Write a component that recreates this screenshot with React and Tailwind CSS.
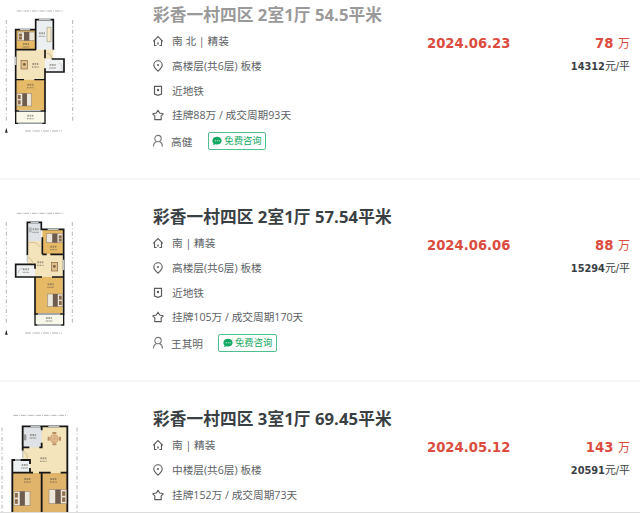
const WOOD = '#e6b966';
const FLOOR = '#f4e4bc';
const TILE = '#dfe3e8';

const listings = [
  {
    title: '彩香一村四区 2室1厅 54.5平米',
    visited: true,
    facing: '南 北 | 精装',
    floor: '高楼层(共6层) 板楼',
    metro: true,
    deal: '挂牌88万 / 成交周期93天',
    agent: '高健',
    date: '2024.06.23',
    price: '78',
    unit: '14312',
    plan: 'first',
  },
  {
    title: '彩香一村四区 2室1厅 57.54平米',
    facing: '南 | 精装',
    floor: '高楼层(共6层) 板楼',
    metro: true,
    deal: '挂牌105万 / 成交周期170天',
    agent: '王其明',
    date: '2024.06.06',
    price: '88',
    unit: '15294',
    plan: 'second',
  },
  {
    title: '彩香一村四区 3室1厅 69.45平米',
    facing: '南 | 精装',
    floor: '中楼层(共6层) 板楼',
    deal: '挂牌152万 / 成交周期73天',
    date: '2024.05.12',
    price: '143',
    unit: '20591',
    plan: 'third',
  },
];

function HomeIcon() {
  return (
    <svg viewBox="0 0 12 12" className="h-3 w-3" fill="none" stroke="currentColor" strokeWidth="1.1">
      <path d="M1.2 6.4 6 1.6l4.8 4.8M2.5 5.2v5.3h2.1M9.5 5.2v5.3H7.4" />
      <path d="M6 7.6v1.9" strokeWidth="1.5" />
    </svg>
  );
}

function PinIcon() {
  return (
    <svg viewBox="0 0 12 12" className="h-3 w-3" fill="none" stroke="currentColor" strokeWidth="1.1">
      <path d="M6 11.2C3.4 8.9 1.8 7.1 1.8 5a4.2 4.2 0 0 1 8.4 0c0 2.1-1.6 3.9-4.2 6.2z" />
      <circle cx="6" cy="5" r="1" fill="currentColor" stroke="none" />
    </svg>
  );
}

function MetroIcon() {
  return (
    <svg viewBox="0 0 12 12" className="h-3 w-3" fill="none" stroke="currentColor" strokeWidth="1.2">
      <path d="M2.5 1.3h7v7.7L6 10.3 2.5 9z" />
      <circle cx="6" cy="5" r="1.2" fill="currentColor" stroke="none" />
    </svg>
  );
}

function StarIcon() {
  return (
    <svg viewBox="0 0 12 12" className="h-3 w-3" fill="none" stroke="currentColor" strokeWidth="1.1" strokeLinejoin="round">
      <path d="M6 1.2 7.7 4l3.5.8-2.1 2.3.2 3.5H2.7l.2-3.5L.8 4.8 4.3 4z" />
    </svg>
  );
}

function UserIcon() {
  return (
    <svg viewBox="0 0 12 14" className="h-3.5 w-3" fill="none" stroke="currentColor" strokeWidth="1.1">
      <circle cx="6" cy="4.6" r="3.2" />
      <path d="M1.5 12.5c0-2.6 1.2-4.2 3-5M10.5 12.5c0-2.6-1.2-4.2-3-5" />
    </svg>
  );
}

function ChatIcon() {
  return (
    <svg viewBox="0 0 10 10" className="h-[10px] w-[10px]">
      <path d="M5 .8c2.6 0 4.6 1.6 4.6 3.9S7.6 8.6 5 8.6c-.6 0-1.2-.1-1.7-.3L1.2 9.2l.3-1.8C.8 6.7.4 5.8.4 4.7.4 2.4 2.4.8 5 .8z" fill="#11a862" />
      <path d="M3.2 4.8h.1M5.2 4.8h.1M7.2 4.8h.1" stroke="#fff" strokeWidth="1" strokeLinecap="round" />
    </svg>
  );
}

function Bed({ x, y, w, h, flip }) {
  return (
    <g>
      <rect x={x} y={y} width={w} height={h} fill="#ece6da" stroke="#a08c70" strokeWidth="2" />
      <rect x={x + w * 0.36} y={y} width={w * 0.32} height={h} fill="#6e5c4e" />
      <rect x={flip ? x + w * 0.76 : x + 3} y={y + 5} width={w * 0.18} height={h * 0.32} fill="#8b6c4c" />
      <rect x={flip ? x + w * 0.76 : x + 3} y={y + h * 0.55} width={w * 0.18} height={h * 0.32} fill="#8b6c4c" />
    </g>
  );
}

function Label({ x, y }) {
  return (
    <g stroke="#564f45" opacity="0.5">
      <path d={`M${x - 9} ${y}h18`} strokeWidth="6" strokeDasharray="5 2" />
      <path d={`M${x - 10} ${y + 9}h20`} strokeWidth="4" strokeDasharray="3 1.5" />
    </g>
  );
}

function Dimensions({ top, left, right, from, to, bottom, start, end }) {
  return (
    <g stroke="#a6a6a6" strokeWidth="2.5" fill="none">
      <path d={`M${from} ${top}H${to}`} strokeDasharray="14 3 3 3" />
      <path d={`M${left} ${start}V${end}M${right} ${start}V${end}`} strokeDasharray="12 7 3 7" />
      {bottom && <path d={`M${from + 25} ${bottom}H${to - 4}`} strokeDasharray="18 3 3 3" />}
      {bottom && <path d={`M${left} ${bottom - 10}l4 15h-8z`} fill="#222" stroke="none" />}
    </g>
  );
}

function PlanFirst() {
  return (
    <>
      <Dimensions top={33} left={19} right={218} from={50} to={190} bottom={393} start={60} end={368} />
      <path d="M107 59h53v90h-53z" fill="#eceff1" />
      <path d="M47 89h61v60H47z" fill={WOOD} />
      <path d="M47 149h88v90H47z" fill={FLOOR} />
      <path d="M135 149h25v28h-25z" fill={FLOOR} />
      <path d="M135 177h57v39h-57z" fill="#eff1f2" />
      <path d="M47 239h88v92H47z" fill={WOOD} />
      <path d="M47 335h88v34H47z" fill="#fbf9e9" />
      <g fill="none" stroke="#161616" strokeWidth="5">
        <path d="M160 149V59h-53v90M107 89H47v60h61M47 149v184h88v-94M135 149v26M135 216h57v-39h-37M135 205v34" />
        <path d="M47 239h25M103 239h32M47 332v38h88v-38" strokeWidth="4" />
        <path d="M117 59h35M60 89h30M47 170v25M57 332h65M54 369h73" stroke="#c3c9cb" strokeWidth="4" />
        <path d="M142 160a15 15 0 0 1 12 16" stroke="#b2a37e" strokeWidth="2" />
      </g>
      <Bed x={54} y={96} w={50} h={26} />
      <Bed x={51} y={280} w={44} h={38} />
      <rect x="63" y="181" width="19" height="26" fill="#dec18a" stroke="#876348" strokeWidth="2" />
      <circle cx="73" cy="193" r="4" fill="#795b43" />
      <path d="M141 82h12v43h-12z" fill="#f7eacb" stroke="#a59f8c" strokeWidth="2" />
      <path d="M178 190q8 1 8 13v10" stroke="#bdbdbd" strokeWidth="2" fill="none" />
      <Label x={126} y={100} />
      <Label x={78} y={132} />
      <Label x={106} y={192} />
      <Label x={158} y={195} />
      <Label x={91} y={254} />
      <Label x={91} y={347} />
    </>
  );
}

function PlanSecond() {
  return (
    <>
      <Dimensions top={34} left={19} right={217} from={50} to={190} bottom={393} start={60} end={368} />
      <path d="M82 61h42v56H82z" fill={TILE} />
      <path d="M127 82h64v75h-64z" fill={WOOD} />
      <path d="M82 117h45v40h64v68H105v-38H82z" fill={FLOOR} />
      <path d="M47 188h58v37H47z" fill="#eff1f2" />
      <path d="M105 225h83v111h-83z" fill={WOOD} />
      <path d="M105 338h86v31h-86z" fill="#f7f8e9" />
      <g fill="none" stroke="#161616" strokeWidth="5">
        <path d="M82 160V61h42v21h67v254h-86V225H47v-38h58v13M127 106v51M127 157h13M151 157h40M105 225h21M156 225h35" />
        <path d="M105 336v33h86v-33" strokeWidth="4" />
        <path d="M92 61h24M143 82h33M191 173v31M82 160v21M114 336h67M112 369h72" stroke="#c3c9cb" strokeWidth="4" />
        <path d="M85 123c14-5 27 0 36 12M83 166q14 4 15 20" stroke="#bba982" strokeWidth="2" />
      </g>
      <path d="M85 76h10v15H85z" fill="#aeb4b8" />
      <Bed x={139} y={95} w={49} h={27} flip />
      <Bed x={142} y={276} w={46} h={38} flip />
      <rect x="154" y="181" width="19" height="26" fill="#dec18a" stroke="#876348" strokeWidth="2" />
      <circle cx="163" cy="193" r="4" fill="#795b43" />
      <path d="M54 214q4-19 18-12" stroke="#aaa" strokeWidth="2" fill="none" />
      <Label x={107} y={82} />
      <Label x={160} y={134} />
      <Label x={121} y={181} />
      <Label x={78} y={202} />
      <Label x={152} y={247} />
      <Label x={147} y={348} />
    </>
  );
}

function PlanThird() {
  return (
    <>
      <Dimensions top={34} left={6} right={231} from={40} to={202} start={70} end={330} />
      <path d="M68 68h134v139H68z" fill={FLOOR} />
      <path d="M68 68h57v62H68z" fill={TILE} />
      <path d="M37 168h53v38H37z" fill="#edf1f2" />
      <path d="M37 207h165v125H37z" fill="#e0b46b" />
      <g fill="none" stroke="#161616" strokeWidth="5.5">
        <path d="M68 140V67h134v265M68 130h20M125 67v12M118 130h7v-14M68 168H37v164M68 168h22v12M90 192v14H37M90 206h9M117 206h35M182 206h20M125 207v125" />
        <path d="M92 67h29M145 67h33M68 140v22M45 168h17" stroke="#c3c9cb" strokeWidth="4" />
        <path d="M68 141q16 6 14 24" stroke="#bba982" strokeWidth="2" />
      </g>
      <path d="M72 91h7v18h-7z" fill="#999" />
      <path d="M157 84h12v6h-12zM157 118h12v6h-12zM143 98h6v12h-6zM177 98h6v12h-6z" fill="#b98e63" />
      <circle cx="163" cy="104" r="12" fill="#e6bd8e" stroke="#b98e63" strokeWidth="2" />
      <path d="M163 95v18M154 104h18" stroke="#c5a27a" strokeWidth="2" />
      <Bed x={42} y={262} w={48} h={43} />
      <Bed x={147} y={257} w={52} h={42} flip />
      <Label x={99} y={93} />
      <Label x={130} y={163} />
      <Label x={74} y={183} />
      <Label x={82} y={225} />
      <Label x={160} y={225} />
    </>
  );
}

const plans = { first: PlanFirst, second: PlanSecond, third: PlanThird };

function Row({ icon, children }) {
  return (
    <div className="flex h-[24.7px] items-center gap-2">
      <span className="flex w-3 shrink-0 justify-center text-[#5c5c5c]">{icon}</span>
      <span>{children}</span>
    </div>
  );
}

function Listing({ item }) {
  const Plan = plans[item.plan];
  return (
    <li className="flex h-[202px] shrink-0 border-b-2 border-[#f6f6f6] pr-[10px]">
      <svg viewBox="0 0 300 420" className="mt-[22px] h-[140px] w-[100px] shrink-0">
        <Plan />
      </svg>
      <div className="ml-[52px] w-[275px] shrink-0 pt-[25px] text-[10.67px] whitespace-nowrap text-[#5d6265]">
        <h2
          className={`ml-px h-[26px] text-[16.67px] leading-[24px] font-bold tracking-[0.08px] ${
            item.visited ? 'text-[#999]' : 'text-[#394043]'
          }`}
        >
          {item.title}
        </h2>
        <Row icon={<HomeIcon />}>{item.facing}</Row>
        <Row icon={<PinIcon />}>{item.floor}</Row>
        {item.metro && <Row icon={<MetroIcon />}>近地铁</Row>}
        <Row icon={<StarIcon />}>{item.deal}</Row>
        {item.agent && (
          <div className="flex h-[26px] items-center">
            <span className="w-[19px] text-[#777]">
              <UserIcon />
            </span>
            <span className="pt-[3px]">{item.agent}</span>
            <button className="ml-[15.5px] flex h-[18px] items-center gap-0.5 rounded-[2px] border border-[#4dbf8c] px-[3.5px] text-[9.33px] text-[#11a862]">
              <ChatIcon />
              免费咨询
            </button>
          </div>
        )}
      </div>
      <div className="flex grow justify-between pt-[55px] font-['DejaVu_Sans_Condensed','DejaVu_Sans','Noto_Sans_CJK_SC',sans-serif]">
        <span className="text-[14.67px] leading-5 font-bold text-[#db4c3f] [font-stretch:condensed]">{item.date}</span>
        <div className="text-right whitespace-nowrap">
          <p className="text-[14.67px] leading-5 font-bold text-[#db4c3f] [font-stretch:condensed]">
            {item.price} <span className="text-[12px] font-normal">万</span>
          </p>
          <p className="mt-[5px] text-[10.9px] leading-4 text-[#394043] [font-stretch:condensed]">
            <span className="font-bold">{item.unit}</span>元/平
          </p>
        </div>
      </div>
    </li>
  );
}

export default function App() {
  return (
    <main className="h-[515px] w-[640px] overflow-hidden bg-white font-['Open_Sans','Noto_Sans_CJK_SC',sans-serif]">
      <div className="h-[513px] overflow-hidden border-b border-[#dcdcdc]">
        <ul className="-mt-[22px] flex flex-col">
          {listings.map((item) => (
            <Listing key={item.title} item={item} />
          ))}
        </ul>
      </div>
    </main>
  );
}
